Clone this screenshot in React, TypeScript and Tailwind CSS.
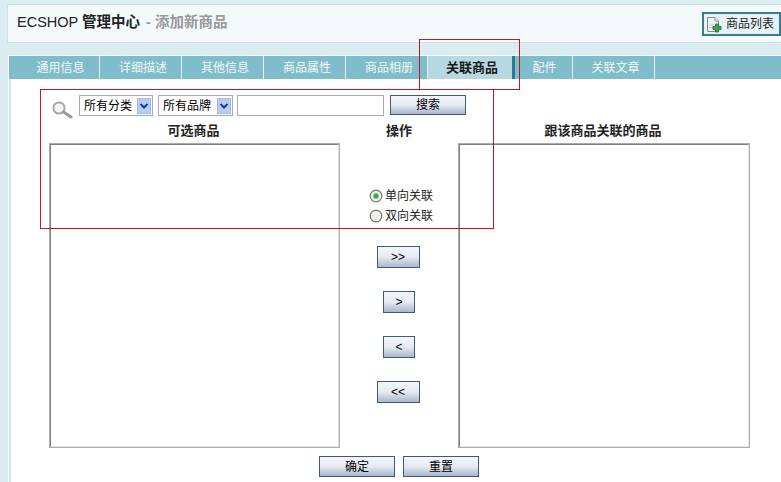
import React from "react";

const cjk = { fontFamily: '"Liberation Sans","Noto Sans CJK SC",sans-serif' };

function Btn({ w, h, children }: { w: string; h: string; children: React.ReactNode }) {
  return (
    <div className={`${w} ${h} border border-[#3f5a73] bg-gradient-to-b from-[#f4f6fa] via-[#e6eaf2] to-[#a9b6cf] flex items-center justify-center text-[12px] text-black shrink-0`}>
      {children}
    </div>
  );
}

function Arrow() {
  return (
    <svg width="14" height="16" viewBox="0 0 14 16" className="shrink-0">
      <rect x="0.5" y="0.5" width="13" height="15" fill="#b7cbf5" stroke="#a3b9ea" />
      <path d="M3.5 6 L7 9.5 L10.5 6" fill="none" stroke="#1f3a8a" strokeWidth="2" />
    </svg>
  );
}

function Select({ w, label }: { w: string; label: string }) {
  return (
    <div className={`${w} h-[21px] border border-[#a5acb2] bg-white flex items-center justify-between pl-[4px] pr-[1px] text-[12px] text-black shrink-0`}>
      <span>{label}</span>
      <Arrow />
    </div>
  );
}

function ListBox({ w }: { w: string }) {
  return (
    <div className={`${w} h-[305px] border border-[#ababab] shrink-0`}>
      <div className="h-full bg-white border border-t-[#808080] border-l-[#808080] border-r-[#e6e6e6] border-b-[#e6e6e6]" />
    </div>
  );
}

function Radio({ checked, label }: { checked?: boolean; label: string }) {
  return (
    <div className="flex items-center gap-[2px] h-[20px] text-[12px] text-[#222]">
      <svg width="14" height="14" viewBox="0 0 14 14" className="shrink-0">
        <circle cx="7" cy="7" r="5.8" fill="#f1f1ec" stroke="#6f7a74" strokeWidth="1.2" />
        {checked && <circle cx="7" cy="7" r="2.7" fill="#3cab4b" />}
      </svg>
      <span>{label}</span>
    </div>
  );
}

const tabs = ["通用信息", "详细描述", "其他信息", "商品属性", "商品相册"];

export default function App() {
  return (
    <div style={cjk} className="relative w-[781px] h-[482px] overflow-hidden bg-[#dcedf2] pt-[4px] pl-[7px]">
      <div className="h-[39px] bg-[#f4f9fc] border-y border-l border-[#cfe0e6] flex items-center justify-between pl-[9px]">
        <div className="text-[14.5px] leading-none text-[#222] -mt-[3px]">
          ECSHOP <span className="font-bold">管理中心</span>
          <span className="text-[#9a9a9a] font-bold ml-[2px]"> - 添加新商品</span>
        </div>
        <div className="w-[79px] h-[24px] border-2 border-[#3a7f8c] bg-[#e6f2f7] flex items-center gap-[4px] pl-[2px] text-[12px] text-[#222] mt-[1px] shrink-0">
          <svg width="16" height="17" viewBox="0 0 16 17" className="shrink-0">
            <path d="M1.5 1.5 H9 L12.5 5 V15.5 H1.5 Z" fill="#eef1f6" stroke="#7d8aa0" />
            <path d="M9 1.5 V5 H12.5" fill="#fff" stroke="#7d8aa0" />
            <path d="M3.5 9 H8 M3.5 11.5 H7" stroke="#b9c2d0" />
            <path d="M9.5 8 H12.5 V10.5 H15 V13.5 H12.5 V16 H9.5 V13.5 H7 V10.5 H9.5 Z" fill="#3fa844" stroke="#1e6b28" strokeWidth="0.8" />
          </svg>
          <span>商品列表</span>
        </div>
      </div>

      <div className="mt-[12px] ml-[1px] border-t border-l border-[#f6fbfc] h-[428px] flex flex-col bg-[#cfe6ec]">
        <div className="h-[23px] bg-[#80bdcb] flex items-stretch text-[12px] shrink-0">
          {tabs.map((t) => (
            <div key={t} className="w-[82px] border-r border-[#e4f1f4] flex items-center justify-center text-[#f1f8fa] pl-[5px] first:w-[91px] first:pl-[13px]">
              {t}
            </div>
          ))}
          <div className="w-[88px] ml-[-1px] bg-[#b5d8e1] border-l border-[#e4f1f4] border-r-[3px] border-r-[#2f7a90] flex items-center justify-center pl-[4px] text-[13px] font-bold text-[#1a1a1a]">
            关联商品
          </div>
          <div className="w-[58px] border-r border-[#e4f1f4] flex items-center justify-center pl-[2px] text-[#f1f8fa]">配件</div>
          <div className="w-[82px] border-r border-[#e4f1f4] flex items-center justify-center pl-[4px] text-[#f1f8fa]">关联文章</div>
        </div>

        <div className="flex-1 ml-[2px] bg-white flex flex-col pt-[16px] pl-[38px]">
          <div className="flex items-start h-[21px]">
            <svg width="24" height="20" viewBox="0 0 24 20" className="shrink-0 mr-[6px] mt-[4px]">
              <circle cx="10" cy="9" r="5.6" fill="#f5f5f5" stroke="#a8a8a8" strokeWidth="2" />
              <path d="M14.5 13 L22 18" stroke="#9a9a9a" strokeWidth="3" strokeLinecap="round" />
            </svg>
            <Select w="w-[74px]" label="所有分类" />
            <div className="w-[5px]" />
            <Select w="w-[75px]" label="所有品牌" />
            <div className="w-[4px]" />
            <div className="w-[147px] h-[21px] border border-[#a5acb2] bg-white shrink-0" />
            <div className="w-[6px]" />
            <Btn w="w-[76px]" h="h-[20px]">搜索</Btn>
          </div>

          <div className="flex items-start mt-[8px]">
            <div className="w-[291px] flex flex-col items-center shrink-0">
              <div className="h-[14px] leading-[14px] text-[13px] font-bold text-[#222] mb-[5px] pr-[2px]">可选商品</div>
              <ListBox w="w-[291px]" />
            </div>
            <div className="w-[118px] flex flex-col items-center shrink-0">
              <div className="h-[14px] leading-[14px] text-[13px] font-bold text-[#222]">操作</div>
              <div className="mt-[48px] flex flex-col items-start ml-[4px]">
                <Radio checked label="单向关联" />
                <Radio label="双向关联" />
              </div>
              <div className="mt-[20px] mr-[2px]"><Btn w="w-[43px]" h="h-[22px]">&gt;&gt;</Btn></div>
              <div className="mt-[23px]"><Btn w="w-[32px]" h="h-[22px]">&gt;</Btn></div>
              <div className="mt-[23px]"><Btn w="w-[32px]" h="h-[22px]">&lt;</Btn></div>
              <div className="mt-[23px] mr-[2px]"><Btn w="w-[43px]" h="h-[22px]">&lt;&lt;</Btn></div>
            </div>
            <div className="w-[292px] flex flex-col items-center shrink-0">
              <div className="h-[14px] leading-[14px] text-[13px] font-bold text-[#222] mb-[5px] pr-[2px]">跟该商品关联的商品</div>
              <ListBox w="w-[292px]" />
            </div>
          </div>

          <div className="flex justify-center gap-[8px] mt-[8px] w-[700px]">
            <Btn w="w-[76px]" h="h-[21px]">确定</Btn>
            <Btn w="w-[76px]" h="h-[21px]">重置</Btn>
          </div>
        </div>
      </div>

      <div className="absolute left-[40px] top-[89px] w-[454px] h-[140px] border border-[#c4161c] pointer-events-none" />
      <div className="absolute left-[419px] top-[39px] w-[101px] h-[51px] border border-[#c4161c] pointer-events-none" />
    </div>
  );
}
